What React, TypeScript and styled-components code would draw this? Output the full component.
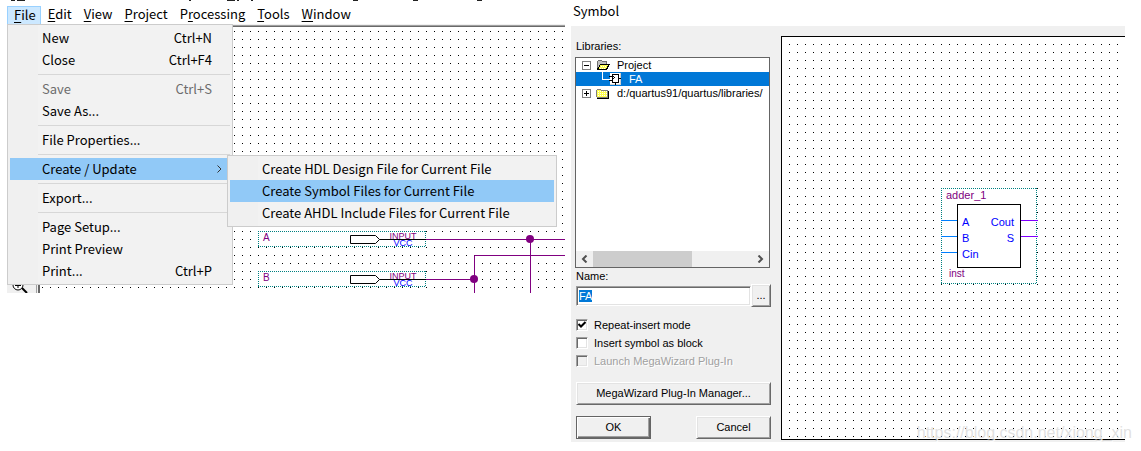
import React, { useEffect, useRef } from "react";
import styled, { createGlobalStyle, css } from "styled-components";

const uiFont = `"Noto Sans CJK SC", "Noto Sans", sans-serif`;
const classicFont = `"Liberation Sans", Arial, sans-serif`;

const GlobalStyle = createGlobalStyle`
  *, *::before, *::after { box-sizing: border-box; }
  body { margin: 0; background: #fff; color: #000; font: 13px/19px ${uiFont}; }
  button, input { font: inherit; color: inherit; margin: 0; }
`;

const dotGrid = (x: number, y: number) => css`
  background-color: #fff;
  background-image: linear-gradient(transparent 1px, #fff 1px),
    linear-gradient(90deg, #000 1px, #fff 1px);
  background-size: 8px 8px;
  background-position: ${x}px ${y}px;
`;

const Page = styled.main`
  position: relative;
  display: grid;
  grid-template-columns: minmax(0, 565fr) minmax(0, 576fr);
  align-items: start;
  padding-bottom: 9px;
`;

/* ---------- editor window ---------- */

const Editor = styled.section`
  padding-left: 7px;
`;

const TitleEdge = styled.svg`
  display: block;
  width: 100%;
  height: 5px;
`;

const MenuBar = styled.nav`
  display: flex;
  height: 19px;
`;

const MenuRoot = styled.div`
  position: relative;
`;

const MenuBarButton = styled.button<{ $open?: boolean }>`
  height: 19px;
  padding: 0 4px 2px 6px;
  border: 1px solid ${(p) => (p.$open ? "#99d1ff" : "transparent")};
  background: ${(p) => (p.$open ? "#cce8ff" : "transparent")};
  line-height: 15px;
  white-space: nowrap;

  u {
    text-underline-offset: 2px;
  }
`;

const Menu = styled.div<{ $sub?: boolean }>`
  position: absolute;
  z-index: 2;
  top: ${(p) => (p.$sub ? "-3px" : "19px")};
  left: ${(p) => (p.$sub ? "217px" : "0")};
  width: ${(p) => (p.$sub ? "330px" : "226px")};
  padding: 2px;
  border: 1px solid #ccc;
  background: linear-gradient(90deg, #f0f0f0 30px, #f2f2f2 30px);
`;

const MenuEntry = styled.div`
  position: relative;
`;

const MenuItem = styled.button<{ $active?: boolean }>`
  display: flex;
  justify-content: space-between;
  align-items: center;
  width: 100%;
  height: 22px;
  padding: 0 18px 0 32px;
  border: 0;
  background: ${(p) => (p.$active ? "#91c9f7" : "transparent")};
  line-height: 22px;
  text-align: left;
  white-space: nowrap;

  &:disabled {
    color: #6d6d6d;
  }
`;

const Chevron = styled.svg`
  width: 5px;
  height: 8px;
  margin-right: -10px;
  fill: none;
  stroke: #333;
`;

const Separator = styled.hr`
  height: 1px;
  margin: 3px 0 3px 28px;
  border: 0;
  background: #d7d7d7;
`;

const Workspace = styled.div`
  display: flex;
  height: 269px;
  border-top: 1px solid #f0f0f0;
`;

const ToolStrip = styled.div`
  display: flex;
  align-items: flex-end;
  flex: none;
  width: 33px;
  padding-left: 4px;
  border-right: 2px solid #696969;
  background: linear-gradient(90deg, #f0f0f0 29px, #a0a0a0 29px 30px, #f0f0f0 30px);
`;

const Schematic = styled.div`
  flex: 1;
  min-width: 0;
  border-top: 1px solid #a0a0a0;
  box-shadow: inset 0 1px #696969;
  ${dotGrid(2, 5)}
`;

const Drawing = styled.svg`
  display: block;
  width: 100%;
  height: 100%;
  overflow: hidden;
  font-family: ${classicFont};
`;

/* ---------- symbol dialog ---------- */

const Dialog = styled.section`
  padding: 0 16px 0 6px;
  font: 11px/14px ${classicFont};
`;

const DialogTitle = styled.h1`
  height: 26px;
  margin: 0;
  padding: 1px 0 0 2px;
  font: 13px/20px ${uiFont};
`;

const DialogBody = styled.div`
  display: flex;
  gap: 10px;
  padding: 10px 0 2px 4px;
  background: #f0f0f0;
`;

const Controls = styled.form`
  flex: none;
  width: 196px;
`;

const Caption = styled.label`
  display: block;
  padding: 2px 0 3px 1px;
  height: 21px;
  line-height: 16px;
`;

const NameCaption = styled(Caption)`
  height: 16px;
  padding: 0 0 0 1px;
`;

const LibraryBox = styled.div`
  display: flex;
  flex-direction: column;
  width: 195px;
  height: 211px;
  border: 1px solid #646464;
  background: #fff;
`;

const Tree = styled.ul`
  flex: 1;
  margin: 0;
  padding: 0;
  list-style: none;
`;

const TreeRow = styled.li<{ $selected?: boolean }>`
  display: flex;
  align-items: center;
  gap: 5px;
  height: 14px;
  padding-left: ${(p) => (p.$selected ? "26px" : "6px")};
  background: ${(p) => (p.$selected ? "#0078d7" : "transparent")};
  color: ${(p) => (p.$selected ? "#fff" : "#000")};
  line-height: 13px;
  white-space: nowrap;
`;

const TreeLabel = styled.span`
  padding-left: 2px;
`;

const ScrollBar = styled.div`
  display: flex;
  align-items: center;
  height: 16px;
  background: #f0f0f0;
`;

const ScrollArrow = styled.button`
  display: flex;
  align-items: center;
  justify-content: center;
  width: 17px;
  height: 16px;
  padding: 0;
  border: 0;
  background: transparent;

  svg {
    fill: none;
    stroke: #505050;
    stroke-width: 2;
  }
`;

const ScrollTrack = styled.div`
  flex: 1;
  height: 16px;
`;

const ScrollThumb = styled.div`
  width: 62%;
  height: 16px;
  background: #cdcdcd;
`;

const NameRow = styled.div`
  display: flex;
  align-items: center;
  padding-left: 1px;
`;

const sunken = css`
  border: 1px solid;
  border-color: #a0a0a0 #fff #fff #a0a0a0;
  box-shadow: inset 1px 1px #696969, inset -1px -1px #e3e3e3;
`;

const NameInput = styled.input`
  flex: 1;
  min-width: 0;
  height: 20px;
  padding: 1px 2px;
  background: #fff;
  outline: 0;
  ${sunken}

  &::selection {
    background: #0078d7;
    color: #fff;
  }
`;

const PushButton = styled.button<{ $default?: boolean; $width: string }>`
  width: ${(p) => p.$width};
  height: 23px;
  padding: 0;
  border: 1px solid;
  border-color: ${(p) => (p.$default ? "#646464" : "#fff #696969 #696969 #fff")};
  background: #f0f0f0;
  box-shadow: ${(p) =>
    p.$default
      ? "inset 1px 1px #fff, inset -1px -1px #696969, inset -2px -2px #a0a0a0"
      : "inset 1px 1px #e3e3e3, inset -1px -1px #a0a0a0"};
  line-height: 19px;
  text-align: center;
`;

const Options = styled.div`
  display: grid;
  gap: 5px;
  padding: 11px 0 15px 1px;
`;

const Option = styled.label<{ $disabled?: boolean }>`
  display: flex;
  align-items: center;
  gap: 6px;
  height: 13px;
  white-space: nowrap;
  color: ${(p) => (p.$disabled ? "#a0a0a0" : "#000")};
  text-shadow: ${(p) => (p.$disabled ? "1px 1px #fff" : "none")};
`;

const CheckBox = styled.input`
  appearance: none;
  flex: none;
  width: 12px;
  height: 12px;
  background: #fff;
  ${sunken}

  &:disabled {
    background: #f0f0f0;
  }
`;

const CheckFrame = styled.span`
  display: grid;
  place-items: center;

  > * {
    grid-area: 1 / 1;
  }

  svg {
    pointer-events: none;
  }
`;

const Actions = styled.div`
  display: flex;
  flex-wrap: wrap;
  justify-content: space-between;
  row-gap: 11px;
  padding-left: 1px;
`;

const Preview = styled.div`
  flex: 1;
  min-width: 0;
  height: 404px;
  border: 1px solid #000;
  border-right: 0;
  ${dotGrid(7, 7)}
`;

const Watermark = styled.span`
  position: absolute;
  right: 9px;
  bottom: 8px;
  color: rgba(195, 195, 195, 0.5);
  font: 16px/20px ${classicFont};
  text-shadow: 1px 1px rgba(255, 255, 255, 0.8);
`;

/* ---------- drawings ---------- */

const DottedFrame = ({ w, h }: { w: number; h: number }) => (
  <g shapeRendering="crispEdges">
    <rect width={w} height={h} fill="#fff" />
    <path
      d={`M0 0.500H${w}M0 ${h - 0.5}H${w}M0.500 0V${h}M${w - 0.5} 0V${h}`}
      fill="none"
      stroke="#008080"
      strokeDasharray="1 1"
    />
  </g>
);

const InputPin = ({ name, y }: { name: string; y: number }) => (
  <g transform={`translate(218 ${y})`} fill="none">
    <DottedFrame w={168} h={16} />
    <text x="5" y="10" fontSize="10" fill="#800080">{name}</text>
    <text x="145" y="8" fontSize="9" fill="#800080" textAnchor="middle">INPUT</text>
    <text x="145" y="15" fontSize="9" fill="#0000ff" textAnchor="middle">VCC</text>
    <path d="M92.500 4.500H117.500L121.500 8.500L117.500 12.500H92.500ZM121.500 8.500H168" stroke="#000" />
  </g>
);

const Toggle = ({ open }: { open?: boolean }) => (
  <svg width="9" height="9" fill="none" shapeRendering="crispEdges">
    <rect x="0.5" y="0.5" width="8" height="8" stroke="#808080" />
    <path d={open ? "M2 4.500H7" : "M2 4.500H7M4.500 2V7"} stroke="#000" />
  </svg>
);

const OpenFolder = () => (
  <svg width="14" height="11" shapeRendering="crispEdges">
    <path d="M1.500 9.500V1.500L2.500 0.500H5.500L6.500 1.500H10.500V4" fill="#c0c0c0" stroke="#707070" />
    <path d="M1.500 9.500L4.500 4.500H13L10.500 9.500Z" fill="#ffff4d" stroke="#000" />
    <path d="M5 6.500H11M4 8.500H10" stroke="#fff" strokeDasharray="1 1" />
  </svg>
);

const ClosedFolder = () => (
  <svg width="14" height="11" shapeRendering="crispEdges">
    <path d="M0.500 8.500V2.500L1.500 1.500H4.500L5.500 2.500H11.500V9.500H1.500Z" fill="#ffff4d" stroke="#808080" />
    <path d="M1 10H12.500V3" fill="none" stroke="#000" />
    <path d="M2 3.500H11M2 5.500H11M2 7.500H11" stroke="#fff" strokeDasharray="1 1" />
  </svg>
);

const SymbolIcon = () => (
  <svg width="20" height="14" fill="none" shapeRendering="crispEdges">
    <path d="M0.500 0V7.500H8" stroke="#fff" />
    <rect x="8" y="1" width="11" height="12" fill="#fff" />
    <path d="M8 12.500H19M18.500 1V12" stroke="#d0d0d0" />
    <path d="M10.500 2.500H16.500V10.500H10.500ZM7 4.500H10M7 8.500H10M17 6.500H19M13.500 11V13" stroke="#000" />
    <path d="M10.500 4L12.500 5.500L10.500 7" stroke="#000" />
  </svg>
);

const FullAdder = () => (
  <Drawing>
    <g transform="translate(159 151)" fontSize="11" fill="#0000ff">
      <DottedFrame w={96} h={96} />
      <rect x="16.500" y="16.500" width="63" height="63" fill="#fff" stroke="#000" />
      <path d="M0 32.500H16M0 48.500H16M0 64.500H16" stroke="#0080ff" />
      <path d="M80 32.500H97M80 48.500H97" stroke="#8000ff" />
      <text x="5" y="11" fill="#800080">adder_1</text>
      <text x="21" y="38">A</text>
      <text x="21" y="54">B</text>
      <text x="21" y="70">Cin</text>
      <text x="73" y="38" textAnchor="end">Cout</text>
      <text x="73" y="54" textAnchor="end">S</text>
      <text x="8" y="89" fontSize="10" fill="#800080">inst</text>
    </g>
  </Drawing>
);

/* ---------- data ---------- */

const menuTitles = ["Edit", "View", "Project", "Processing", "Tools", "Window"];
const mnemonicAt: Record<string, number> = { Processing: 1 };

const createItems = [
  "Create HDL Design File for Current File",
  "Create Symbol Files for Current File",
  "Create AHDL Include Files for Current File",
];

type Entry = { label: string; keys?: string; disabled?: boolean; sub?: string[] };

const fileMenu: Entry[][] = [
  [{ label: "New", keys: "Ctrl+N" }, { label: "Close", keys: "Ctrl+F4" }],
  [{ label: "Save", keys: "Ctrl+S", disabled: true }, { label: "Save As..." }],
  [{ label: "File Properties..." }],
  [{ label: "Create / Update", sub: createItems }],
  [{ label: "Export..." }],
  [{ label: "Page Setup..." }, { label: "Print Preview" }, { label: "Print...", keys: "Ctrl+P" }],
];

const Mnemonic = ({ text }: { text: string }) => {
  const i = mnemonicAt[text] ?? 0;
  return (
    <>
      {text.slice(0, i)}
      <u>{text[i]}</u>
      {text.slice(i + 1)}
    </>
  );
};

const FileMenu = () => (
  <Menu role="menu">
    {fileMenu.map((group, g) => (
      <React.Fragment key={g}>
        {g > 0 && <Separator />}
        {group.map((e) => (
          <MenuEntry key={e.label}>
            <MenuItem role="menuitem" $active={!!e.sub} disabled={e.disabled}>
              <span>{e.label}</span>
              {e.keys && <span>{e.keys}</span>}
              {e.sub && (
                <Chevron viewBox="0 0 5 8">
                  <path d="M0.500 0.500L4 4L0.500 7.500" />
                </Chevron>
              )}
            </MenuItem>
            {e.sub && (
              <Menu $sub role="menu">
                {e.sub.map((label, i) => (
                  <MenuItem key={label} role="menuitem" $active={i === 1}>
                    {label}
                  </MenuItem>
                ))}
              </Menu>
            )}
          </MenuEntry>
        ))}
      </React.Fragment>
    ))}
  </Menu>
);

const EditorWindow = () => (
  <Editor>
    <TitleEdge shapeRendering="crispEdges" aria-hidden="true">
      <path
        d="M4 0.500H8M10 0.500H18M182 0.500H184M220 0.500H228M230 0.500H232M244 0.500H246M346 0.500H351M406 0.500H411M470 0.500H475"
        stroke="#222"
      />
    </TitleEdge>
    <MenuBar>
      <MenuRoot>
        <MenuBarButton $open aria-haspopup="menu" aria-expanded="true">
          <Mnemonic text="File" />
        </MenuBarButton>
        <FileMenu />
      </MenuRoot>
      {menuTitles.map((t) => (
        <MenuBarButton key={t}>
          <Mnemonic text={t} />
        </MenuBarButton>
      ))}
    </MenuBar>
    <Workspace>
      <ToolStrip>
        <svg width="18" height="14" fill="none" stroke="#000">
          <circle cx="7" cy="6" r="5" fill="#fff" />
          <path d="M4 6.500H10M7 4V9" />
          <path d="M11 9L16 14" strokeWidth="2" />
        </svg>
      </ToolStrip>
      <Schematic>
        <Drawing>
          <InputPin name="A" y={205} />
          <InputPin name="B" y={245} />
          <path
            d="M386 213.500H2000M386 253.500H434M434.500 400V229.500H2000M490.500 213V400"
            fill="none"
            stroke="#800080"
          />
          <g fill="#800080">
            <circle cx="490" cy="213" r="4" />
            <circle cx="434" cy="253" r="4" />
          </g>
        </Drawing>
      </Schematic>
    </Workspace>
  </Editor>
);

const Check = ({ id, label, checked, disabled }: { id: string; label: string; checked?: boolean; disabled?: boolean }) => (
  <Option htmlFor={id} $disabled={disabled}>
    <CheckFrame>
      <CheckBox id={id} type="checkbox" defaultChecked={checked} disabled={disabled} />
      {checked && (
        <svg width="8" height="8" fill="none" stroke="#000" strokeWidth="2">
          <path d="M0.500 3L3 5.500L7.500 1" />
        </svg>
      )}
    </CheckFrame>
    {label}
  </Option>
);

const SymbolDialog = () => {
  const nameRef = useRef<HTMLInputElement>(null);

  useEffect(() => {
    nameRef.current?.focus();
    nameRef.current?.select();
  }, []);

  return (
    <Dialog>
      <DialogTitle>Symbol</DialogTitle>
      <DialogBody>
        <Controls onSubmit={(e) => e.preventDefault()}>
          <Caption as="div" id="libraries">Libraries:</Caption>
          <LibraryBox>
            <Tree role="tree" aria-labelledby="libraries">
              <TreeRow role="treeitem">
                <Toggle open />
                <OpenFolder />
                <TreeLabel>Project</TreeLabel>
              </TreeRow>
              <TreeRow role="treeitem" $selected>
                <SymbolIcon />
                <TreeLabel>FA</TreeLabel>
              </TreeRow>
              <TreeRow role="treeitem">
                <Toggle />
                <ClosedFolder />
                <TreeLabel>d:/quartus91/quartus/libraries/</TreeLabel>
              </TreeRow>
            </Tree>
            <ScrollBar>
              <ScrollArrow type="button" aria-label="Scroll left">
                <svg width="7" height="8"><path d="M5.500 0.500L2 4L5.500 7.500" /></svg>
              </ScrollArrow>
              <ScrollTrack>
                <ScrollThumb />
              </ScrollTrack>
              <ScrollArrow type="button" aria-label="Scroll right">
                <svg width="7" height="8"><path d="M1.500 0.500L5 4L1.500 7.500" /></svg>
              </ScrollArrow>
            </ScrollBar>
          </LibraryBox>
          <NameCaption htmlFor="name">Name:</NameCaption>
          <NameRow>
            <NameInput id="name" ref={nameRef} defaultValue="FA" />
            <PushButton type="button" $width="20px">...</PushButton>
          </NameRow>
          <Options>
            <Check id="repeat" label="Repeat-insert mode" checked />
            <Check id="block" label="Insert symbol as block" />
            <Check id="launch" label="Launch MegaWizard Plug-In" disabled />
          </Options>
          <Actions>
            <PushButton type="button" $width="100%">MegaWizard Plug-In Manager...</PushButton>
            <PushButton type="submit" $width="75px" $default>OK</PushButton>
            <PushButton type="button" $width="75px">Cancel</PushButton>
          </Actions>
        </Controls>
        <Preview>
          <FullAdder />
        </Preview>
      </DialogBody>
    </Dialog>
  );
};

export default function App() {
  return (
    <>
      <GlobalStyle />
      <Page>
        <EditorWindow />
        <SymbolDialog />
        <Watermark>https://blog.csdn.net/xiong_xin</Watermark>
      </Page>
    </>
  );
}
